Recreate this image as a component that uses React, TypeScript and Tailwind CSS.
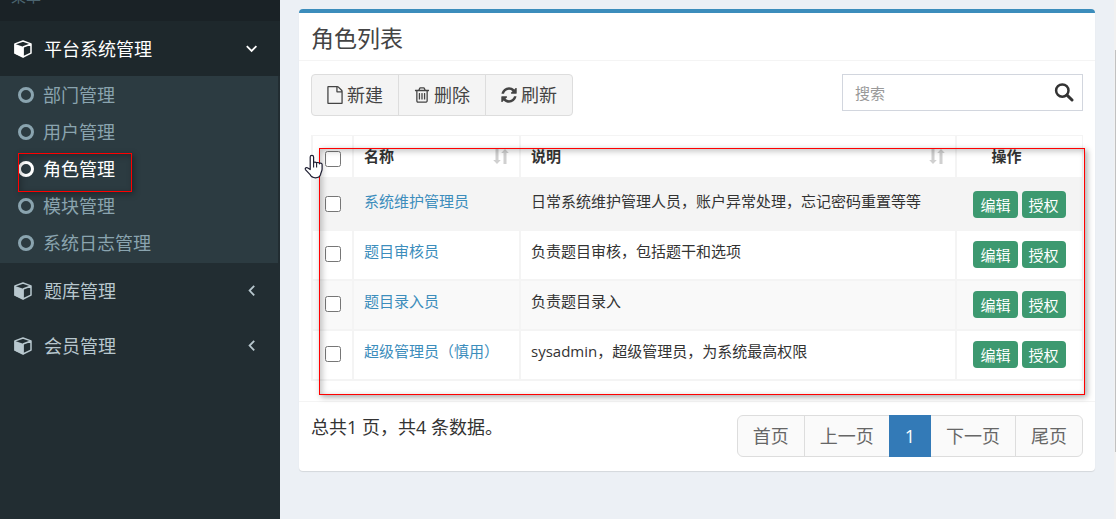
import { useState } from "react";

interface Role {
  id: number;
  name: string;
  description: string;
}

const roles: Role[] = [
  { id: 1, name: "系统维护管理员", description: "日常系统维护管理人员，账户异常处理，忘记密码重置等等" },
  { id: 2, name: "题目审核员", description: "负责题目审核，包括题干和选项" },
  { id: 3, name: "题目录入员", description: "负责题目录入" },
  { id: 4, name: "超级管理员（慎用）", description: "sysadmin，超级管理员，为系统最高权限" },
];

const rowBg: Record<number, string> = { 1: "bg-[#f4f4f4]", 3: "bg-[#f9f9f9]" };

const subMenu = ["部门管理", "用户管理", "角色管理", "模块管理", "系统日志管理"];

const iconPaths = {
  file: "M1596 380q28 28 48 76t20 88v1152q0 40-28 68t-68 28h-1344q-40 0-68-28t-28-68v-1600q0-40 28-68t68-28h896q40 0 88 20t76 48zm-444-244v376h376q-10-29-22-41l-313-313q-12-12-41-22zm384 1528v-1024h-416q-40 0-68-28t-28-68v-416h-768v1536h1280z",
  trash:
    "M704 736v576q0 14-9 23t-23 9h-64q-14 0-23-9t-9-23v-576q0-14 9-23t23-9h64q14 0 23 9t9 23zm256 0v576q0 14-9 23t-23 9h-64q-14 0-23-9t-9-23v-576q0-14 9-23t23-9h64q14 0 23 9t9 23zm256 0v576q0 14-9 23t-23 9h-64q-14 0-23-9t-9-23v-576q0-14 9-23t23-9h64q14 0 23 9t9 23zm128 724v-948h-896v948q0 22 7 40.5t14.5 27 10.5 8.5h832q3 0 10.5-8.5t14.5-27 7-40.5zm-672-1076h448l-48-117q-7-9-17-11h-317q-10 2-17 11zm928 32v64q0 14-9 23t-23 9h-96v948q0 83-47 143.5t-113 60.5h-832q-66 0-113-58.5t-47-141.5v-952h-96q-14 0-23-9t-9-23v-64q0-14 9-23t23-9h309l70-167q15-37 54-63t79-26h320q40 0 79 26t54 63l70 167h309q14 0 23 9t9 23z",
  refresh:
    "M1639 1056q0 5-1 7-64 268-268 434.5t-478 166.5q-146 0-282.5-55t-243.5-157l-129 129q-19 19-45 19t-45-19-19-45v-448q0-26 19-45t45-19h448q26 0 45 19t19 45-19 45l-137 137q71 66 161 102t187 36q134 0 250-65t186-179q11-17 53-117 8-23 30-23h192q13 0 22.5 9.5t9.5 22.5zm25-800v448q0 26-19 45t-45 19h-448q-26 0-45-19t-19-45 19-45l138-138q-148-137-349-137-134 0-250 65t-186 179q-11 17-53 117-8 23-30 23h-199q-13 0-22.5-9.5t-9.5-22.5v-7q65-268 270-434.5t480-166.5q146 0 284 55.5t245 156.5l130-129q19-19 45-19t45 19 19 45z",
};

function Icon({ name }: { name: keyof typeof iconPaths }) {
  return (
    <svg viewBox="128 0 1536 1792" className="h-[18px] w-4 shrink-0" fill="currentColor" aria-hidden="true">
      <path d={iconPaths[name]} />
    </svg>
  );
}

function CubeIcon() {
  return (
    <svg viewBox="0 0 18 18" className="h-[18px] w-[18px] shrink-0" aria-hidden="true">
      <path
        d="M9 1 17 3.9v9.2L9 17 1 13.1V3.9Z M9 7 17 4"
        fill="none"
        stroke="currentColor"
        strokeWidth="1.5"
        strokeLinejoin="round"
      />
      <path d="M.4 3.8 9.9 6.9v10.6L.4 13.5Z" fill="currentColor" />
    </svg>
  );
}

function Chevron({ open }: { open?: boolean }) {
  return (
    <svg
      viewBox="0 0 12 12"
      className="h-3 w-3 shrink-0"
      fill="none"
      stroke="currentColor"
      strokeWidth="1.8"
      aria-hidden="true"
    >
      <path d={open ? "M.8 3.2 5.6 7.9l4.8-4.7" : "M8.2.8 3.6 5.6l4.6 4.8"} />
    </svg>
  );
}

function SortIcon() {
  return (
    <svg viewBox="0 0 16 16" className="h-4 w-4 shrink-0 text-[#d0d0d0]" fill="currentColor" aria-hidden="true">
      <path d="M2.5 0h3v11h2.3L4 15 .2 11h2.3Z M10.5 15h3V4h2.3L12 0 8.2 4h2.3Z" />
    </svg>
  );
}

function HandCursor() {
  return (
    <svg viewBox="0 0 20 25" className="absolute top-[19px] -left-[7px] z-20 h-[25px] w-5" aria-hidden="true">
      <path
        d="M6.2 15.5V3a1.7 1.7 0 0 1 3.4 0v6c0-1.3 3-1.3 3 .3 0-1.2 2.9-1.1 2.9.5 0-1.1 2.6-1 2.6.8V15c0 2.2-1.3 3.4-1.5 5.4-.6 2.3-2.5 3.4-5.1 3.4-3.1 0-4.5-1.2-5.6-3.5L1.4 15.6c-.7-1.6 1.1-2.7 2.5-1.6Z"
        fill="#fff"
        stroke="#1c1c30"
        strokeWidth="1.2"
        strokeLinejoin="round"
      />
      <path d="M9.6 9v4.5M12.6 9.5v4" stroke="#1c1c30" strokeWidth="1.1" />
    </svg>
  );
}

const menuLink = "flex h-[55px] items-center pr-[22px] pl-[14px] text-lg";
const toolBtn =
  "-ml-px flex h-[42px] cursor-pointer items-center gap-1 border border-[#ddd] bg-[#f4f4f4] px-[15px] first:ml-0 first:rounded-l last:rounded-r hover:bg-[#e7e7e7]";
const badge = "flex h-[27px] cursor-pointer items-center rounded bg-[#3d9970] px-[7px] pt-[2px] text-[15px] text-white";
const pageLink =
  "-ml-px flex h-[42px] items-center border px-[15px] first:ml-0 first:rounded-l-md last:rounded-r-md";
const cell = "border-b-2 border-l-2 border-[#f4f4f4] px-[10px] align-top";
const headCell = "border-b-4 border-l-2 border-[#f4f4f4] px-[10px] pt-[10px] align-top";
const highlight = "pointer-events-none absolute z-10 border border-[#f00]";

function Sidebar() {
  return (
    <aside className="w-[280px] shrink-0 bg-[#222d32] text-[#b8c7ce]">
      <div className="flex h-[21px] items-end overflow-hidden bg-[#1a2226] pl-[11px] text-[15px] leading-[50px] text-[#4b646f]">
        菜单
      </div>
      <nav>
        <a href="#platform" className={`${menuLink} bg-[#1e282c] text-white`}>
          <CubeIcon />
          <span className="ml-3 flex-1">平台系统管理</span>
          <Chevron open />
        </a>
        <ul className="mr-[2px] bg-[#2c3b41] pb-[2px]">
          {subMenu.map((label) => {
            const active = label === "角色管理";
            return (
              <li key={label} className="relative">
                <a
                  href={`#${label}`}
                  className={`flex h-[37px] items-center gap-[9px] pl-[18px] text-lg ${active ? "text-white" : "text-[#8aa4af]"}`}
                >
                  <span className="h-4 w-4 rounded-full border-[3px] border-current" />
                  {label}
                </a>
                {active && (
                  <span
                    className={`${highlight} top-[3px] left-[18px] h-[39px] w-[114px] shadow-[2px_2px_6px_rgba(0,0,0,0.35),inset_2px_2px_6px_rgba(0,0,0,0.25)]`}
                  />
                )}
              </li>
            );
          })}
        </ul>
        <a href="#questions" className={menuLink}>
          <CubeIcon />
          <span className="ml-3 flex-1">题库管理</span>
          <Chevron />
        </a>
        <a href="#members" className={menuLink}>
          <CubeIcon />
          <span className="ml-3 flex-1">会员管理</span>
          <Chevron />
        </a>
      </nav>
    </aside>
  );
}

function Toolbar() {
  return (
    <div className="flex items-start justify-between">
      <div className="flex text-lg text-[#444]">
        <button type="button" className={toolBtn}>
          <Icon name="file" />
          新建
        </button>
        <button type="button" className={toolBtn}>
          <Icon name="trash" />
          删除
        </button>
        <button type="button" className={toolBtn}>
          <Icon name="refresh" />
          刷新
        </button>
      </div>
      <div className="flex h-[37px] w-[241px] items-center border border-[#d2d6de] bg-white pr-2">
        <input
          type="text"
          aria-label="搜索"
          placeholder="搜索"
          className="h-full min-w-0 flex-1 px-3 text-[15px] outline-none placeholder:text-[#999]"
        />
        <button type="button" aria-label="提交搜索" className="cursor-pointer text-[#333]">
          <svg viewBox="0 0 20 20" className="h-5 w-5" fill="none" stroke="currentColor" aria-hidden="true">
            <circle cx="8.3" cy="7.6" r="6.2" strokeWidth="2.5" />
            <path d="m13 12.2 5 4.8" strokeWidth="3" strokeLinecap="round" />
          </svg>
        </button>
      </div>
    </div>
  );
}

function RoleTable() {
  const [selected, setSelected] = useState<number[]>([]);
  const toggle = (id: number) =>
    setSelected((prev) => (prev.includes(id) ? prev.filter((x) => x !== id) : [...prev, id]));

  return (
    <div className="relative mt-[19px]">
      <table className="w-full table-fixed border-separate border-spacing-0 border-t border-r border-[#f4f4f4] text-[15px] leading-[21px] text-[#333]">
        <thead>
          <tr className="h-[45px] text-left">
            <th className={`${headCell} w-[41px]`}>
              <input
                type="checkbox"
                aria-label="全选"
                className="mx-auto mt-[5px] block h-4 w-4"
                checked={selected.length === roles.length}
                onChange={(e) => setSelected(e.target.checked ? roles.map((r) => r.id) : [])}
              />
            </th>
            <th className={`${headCell} w-[167px]`}>
              <span className="flex items-center justify-between">
                名称
                <SortIcon />
              </span>
            </th>
            <th className={headCell}>
              <span className="flex items-center justify-between">
                说明
                <SortIcon />
              </span>
            </th>
            <th className={`${headCell} w-[127px] pr-9 text-center`}>操作</th>
          </tr>
        </thead>
        <tbody>
          {roles.map((role) => (
            <tr key={role.id} className={`h-[50px] ${rowBg[role.id] ?? ""}`}>
              <td className={cell}>
                <input
                  type="checkbox"
                  aria-label={role.name}
                  className="mx-auto mt-[15px] block h-4 w-4"
                  checked={selected.includes(role.id)}
                  onChange={() => toggle(role.id)}
                />
              </td>
              <td className={`${cell} pt-[10px] whitespace-nowrap`}>
                <a href={`#role-${role.id}`} className="text-[#3c8dbc]">
                  {role.name}
                </a>
              </td>
              <td className={`${cell} pt-[10px]`}>{role.description}</td>
              <td className={`${cell} pt-[10px]`}>
                <div className="flex justify-center gap-1">
                  <button type="button" className={badge}>
                    编辑
                  </button>
                  <button type="button" className={badge}>
                    授权
                  </button>
                </div>
              </td>
            </tr>
          ))}
        </tbody>
      </table>
      <div
        className={`${highlight} top-[13px] -right-[2px] -bottom-[14px] left-2 shadow-[2px_2px_6px_rgba(0,0,0,0.35),inset_2px_2px_6px_rgba(0,0,0,0.25)]`}
      />
      <HandCursor />
    </div>
  );
}

function Pagination() {
  const normal = "border-[#ddd] bg-[#fafafa] text-[#666]";
  return (
    <nav aria-label="分页" className="flex text-lg">
      <a href="#first" className={`${pageLink} ${normal}`}>
        首页
      </a>
      <a href="#prev" className={`${pageLink} ${normal}`}>
        上一页
      </a>
      <a href="#1" aria-current="page" className={`${pageLink} z-10 border-[#337ab7] bg-[#337ab7] text-white`}>
        1
      </a>
      <a href="#next" className={`${pageLink} ${normal}`}>
        下一页
      </a>
      <a href="#last" className={`${pageLink} ${normal}`}>
        尾页
      </a>
    </nav>
  );
}

export default function App() {
  return (
    <div className="flex min-h-screen bg-[#ecf0f5] font-['Open_Sans','Noto_Sans_CJK_SC',sans-serif] text-[#333]">
      <Sidebar />
      <main className="min-w-0 flex-1 pt-[9px] pr-[19px] pl-[19px]">
        <section className="rounded border-t-4 border-[#3c8dbc] bg-white shadow-[0_1px_1px_rgba(0,0,0,0.1)]">
          <header className="border-b border-[#f4f4f4] px-3 pt-3 pb-2">
            <h1 className="text-[23px] leading-[27px] text-[#444]">角色列表</h1>
          </header>
          <div className="px-3 pt-[13px] pb-5">
            <Toolbar />
            <RoleTable />
          </div>
          <footer className="flex items-start justify-between border-t border-[#f4f4f4] px-3 pt-[13px] pb-[14px]">
            <p className="text-lg leading-6">总共1 页，共4 条数据。</p>
            <Pagination />
          </footer>
        </section>
      </main>
      <div className="w-[2px] shrink-0 bg-[#f1f1f1] pt-[50px] pl-px">
        <div className="h-[402px] bg-[#c1c1c1]" />
      </div>
    </div>
  );
}
